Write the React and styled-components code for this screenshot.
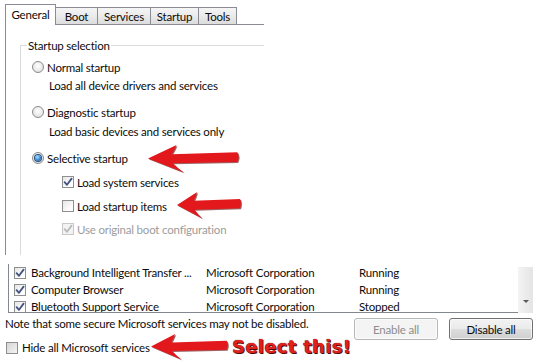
import React from "react";
import styled, { createGlobalStyle } from "styled-components";

const GlobalStyle = createGlobalStyle`
  html, body { margin: 0; padding: 0; background: #fff; }
  body {
    font-family: Lato, "Liberation Sans", sans-serif;
    font-size: 11.5px;
    letter-spacing: -0.2px;
    color: #0c0c0c;
  }
`;

const Page = styled.div`
  position: relative;
  width: 538px;
  height: 362px;
  overflow: hidden;
  background: #fff;
`;

/* ---------- General tab (top part) ---------- */
const Top = styled.div`
  width: 264px;
  padding-top: 4px;
`;

const TabRow = styled.div`
  display: flex;
  align-items: flex-end;
  height: 21px;
  padding-left: 5px;
`;

const Tab = styled.div`
  box-sizing: border-box;
  position: relative;
  z-index: ${(p) => (p.$active ? 2 : 1)};
  width: ${(p) => p.$w}px;
  height: ${(p) => (p.$active ? 21 : 17)}px;
  margin-bottom: ${(p) => (p.$active ? 0 : 1)}px;
  margin-left: ${(p) => (p.$first ? 0 : -1)}px;
  padding-bottom: ${(p) => (p.$active ? 2 : 0)}px;
  border: 1px solid #898c95;
  border-bottom: none;
  background: ${(p) =>
    p.$active ? "#fff" : "linear-gradient(#f5f5f5, #e9e9e9 55%, #dcdcdc)"};
  display: flex;
  align-items: center;
  justify-content: center;
  line-height: 15px;
`;

const Panel = styled.div`
  box-sizing: border-box;
  display: flex;
  flex-direction: column;
  height: 231px;
  margin: -1px 0 0 5px;
  padding: 13px 0 0 14px;
  border-left: 1px solid #898c95;
  border-top: 1px solid #898c95;
`;

const Group = styled.fieldset`
  flex: 1;
  min-width: 0;
  margin: 0;
  padding: 0;
  border: 1px solid #d8dcdf;
  border-right: none;
  border-bottom: none;
`;

const Legend = styled.legend`
  margin-left: 6px;
  padding: 0 1px;
  line-height: 15px;
`;

const Options = styled.div`
  display: flex;
  flex-direction: column;
  padding: 6px 0 0 11px;
`;

const OptionRow = styled.div`
  display: flex;
  align-items: center;
  height: 16px;
  margin-top: ${(p) => p.$mt || 0}px;
  margin-left: ${(p) => p.$indent || 0}px;
  color: ${(p) => (p.$disabled ? "#9c9c9c" : "inherit")};
  white-space: nowrap;
`;

const Radio = styled.span`
  box-sizing: border-box;
  flex: none;
  width: 12px;
  height: 12px;
  margin-right: 3px;
  border-radius: 50%;
  border: 1px solid #8b8b8b;
  background: radial-gradient(circle at 50% 40%, #ffffff, #d9d9d9);
  display: flex;
  align-items: center;
  justify-content: center;
  &::after {
    content: "";
    display: ${(p) => (p.$on ? "block" : "none")};
    width: 6px;
    height: 6px;
    border-radius: 50%;
    background: radial-gradient(circle at 40% 35%, #a6e4ff, #2b7fcc 60%, #0e4888);
    box-shadow: 0 0 0 1px #2a4f7c;
  }
`;

const Box = styled.span`
  box-sizing: border-box;
  flex: none;
  width: 12px;
  height: 12px;
  margin-right: ${(p) => p.$gap}px;
  border: 1px solid ${(p) => (p.$disabled ? "#c8c8c8" : "#8e8f8f")};
  background: ${(p) =>
    p.$disabled
      ? "#f3f3f3"
      : p.$shaded
      ? "linear-gradient(135deg, #d6d6d6, #f4f4f4)"
      : "linear-gradient(135deg, #e6e6e6, #fdfdfd 70%)"};
  display: flex;
  align-items: center;
  justify-content: center;
`;

const Check = ({ color }) => (
  <svg width="10" height="10" viewBox="0 0 10 10">
    <path
      d="M1.6 5.2 L4 7.8 L8.6 1.6"
      fill="none"
      stroke={color}
      strokeWidth="1.8"
      strokeLinecap="round"
      strokeLinejoin="round"
    />
  </svg>
);

const CheckBox = ({ checked, disabled, shaded, gap = 3 }) => (
  <Box $disabled={disabled} $shaded={shaded} $gap={gap}>
    {checked && <Check color={disabled ? "#b9b9b9" : "#41537f"} />}
  </Box>
);

/* ---------- Services list (bottom part) ---------- */
const List = styled.div`
  display: flex;
  width: 525px;
  height: 49px;
  margin: 9px 0 0 8px;
`;

const ListBody = styled.div`
  flex: 1;
  overflow: hidden;
  border-left: 1px solid #828790;
  border-bottom: 1px solid #828790;
`;

const ListRow = styled.div`
  display: grid;
  grid-template-columns: 192px 153px 1fr;
  align-items: center;
  height: 17px;
  padding-left: 5px;
  white-space: nowrap;
`;

const NameCell = styled.div`
  display: flex;
  align-items: center;
`;

const ScrollBar = styled.div`
  width: 15px;
  height: 46px;
  margin-top: 3px;
  background: linear-gradient(to right, #f4f4f4, #e4e4e4);
  display: flex;
  align-items: flex-end;
  justify-content: center;
`;

const ScrollArrow = styled.div`
  width: 0;
  height: 0;
  margin-bottom: 10px;
  border-left: 3px solid transparent;
  border-right: 3px solid transparent;
  border-top: 3px solid #5a5a5a;
`;

const Footer = styled.div`
  display: flex;
  justify-content: space-between;
  align-items: flex-start;
  margin-top: 3px;
  padding: 0 5px;
`;

const Note = styled.div`
  line-height: 16px;
`;

const Buttons = styled.div`
  display: flex;
  gap: 11px;
  margin-top: 2px;
`;

const Button = styled.button`
  box-sizing: border-box;
  width: 84px;
  height: 22px;
  padding: 0;
  border-radius: 3px;
  font: inherit;
  letter-spacing: inherit;
  border: 1px solid ${(p) => (p.disabled ? "#b5b8bb" : "#707070")};
  color: ${(p) => (p.disabled ? "#8e8e8e" : "#0c0c0c")};
  background: ${(p) =>
    p.disabled
      ? "#f4f4f4"
      : "linear-gradient(#f3f3f3, #ebebeb 48%, #dddddd 52%, #cfcfcf)"};
  box-shadow: inset 0 0 0 1px rgba(255, 255, 255, 0.7);
`;

const HideRow = styled.div`
  display: flex;
  align-items: center;
  height: 15px;
  padding-left: 6px;
`;

/* ---------- annotations ---------- */
const ArrowSvg = styled.svg`
  position: absolute;
  left: ${(p) => p.$x}px;
  top: ${(p) => p.$y}px;
  filter: drop-shadow(1px 1px 0.6px rgba(90, 0, 0, 0.6));
`;

const RedArrow = ({ x, y, w, h }) => (
  <ArrowSvg $x={x} $y={y} width={w} height={h} viewBox="0 0 100 30" preserveAspectRatio="none">
    <path
      d="M0 15 L31 1 Q29 6 26 10.5 L97 8.5 Q100 13 97 18.5 L27 20 Q32 25 39 29.5 Z"
      fill="#e3181d"
    />
  </ArrowSvg>
);

const Callout = styled.div`
  position: absolute;
  left: 232px;
  top: 336px;
  font-family: "DejaVu Sans", sans-serif;
  font-weight: 900;
  font-size: 18px;
  line-height: 22px;
  color: #e1201c;
  letter-spacing: 0.3px;
  text-shadow: 1px 1px 0 #4a0a08, 0 0 1px #5a0a08;
`;

const tabs = [
  { label: "General", w: 51, active: true },
  { label: "Boot", w: 43 },
  { label: "Services", w: 54 },
  { label: "Startup", w: 49 },
  { label: "Tools", w: 39 },
];

const services = [
  ["Background Intelligent Transfer ...", "Microsoft Corporation", "Running"],
  ["Computer Browser", "Microsoft Corporation", "Running"],
  ["Bluetooth Support Service", "Microsoft Corporation", "Stopped"],
];

export default function App() {
  return (
    <Page>
      <GlobalStyle />
      <Top>
        <TabRow>
          {tabs.map((t, i) => (
            <Tab key={t.label} $w={t.w} $active={t.active} $first={i === 0}>
              {t.label}
            </Tab>
          ))}
        </TabRow>
        <Panel>
          <Group>
            <Legend>Startup selection</Legend>
            <Options>
              <OptionRow>
                <Radio />
                Normal startup
              </OptionRow>
              <OptionRow $mt={2} $indent={17}>
                Load all device drivers and services
              </OptionRow>
              <OptionRow $mt={11}>
                <Radio />
                Diagnostic startup
              </OptionRow>
              <OptionRow $mt={3} $indent={17}>
                Load basic devices and services only
              </OptionRow>
              <OptionRow $mt={11}>
                <Radio $on />
                Selective startup
              </OptionRow>
              <OptionRow $mt={8} $indent={30}>
                <CheckBox checked />
                Load system services
              </OptionRow>
              <OptionRow $mt={8} $indent={30}>
                <CheckBox />
                Load startup items
              </OptionRow>
              <OptionRow $mt={7} $indent={30} $disabled>
                <CheckBox checked disabled />
                Use original boot configuration
              </OptionRow>
            </Options>
          </Group>
        </Panel>
      </Top>

      <List>
        <ListBody>
          {services.map(([name, maker, status]) => (
            <ListRow key={name}>
              <NameCell>
                <CheckBox checked gap={5} />
                {name}
              </NameCell>
              <div>{maker}</div>
              <div>{status}</div>
            </ListRow>
          ))}
        </ListBody>
        <ScrollBar>
          <ScrollArrow />
        </ScrollBar>
      </List>

      <Footer>
        <Note>Note that some secure Microsoft services may not be disabled.</Note>
        <Buttons>
          <Button disabled>Enable all</Button>
          <Button>Disable all</Button>
        </Buttons>
      </Footer>
      <HideRow>
        <CheckBox shaded gap={4} />
        Hide all Microsoft services
      </HideRow>

      <RedArrow x={148} y={144} w={92} h={29} />
      <RedArrow x={177} y={191} w={65} h={28} />
      <RedArrow x={151} y={333} w={78} h={27} />
      <Callout>Select this!</Callout>
    </Page>
  );
}
